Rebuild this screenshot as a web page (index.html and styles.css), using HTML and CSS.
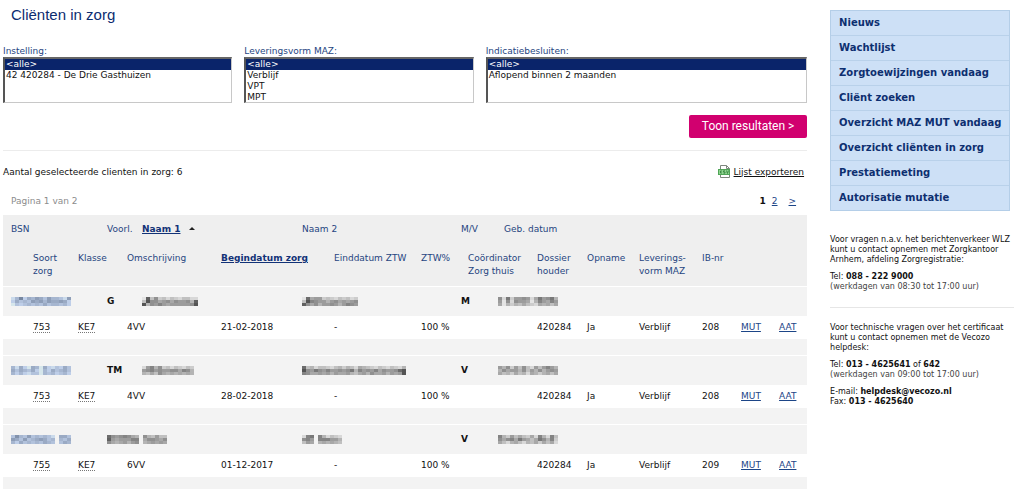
FILE: index.html
```html
<!DOCTYPE html>
<html lang="nl">
<head>
<meta charset="utf-8">
<title>Cliënten in zorg</title>
<link rel="stylesheet" href="styles.css">
</head>
<body>
<div class="page">
<main class="main">
  <h1 class="title">Cliënten in zorg</h1>
  <form class="filter" onsubmit="return false">
    <div class="fields">
      <div class="field">
        <label for="instelling">Instelling:</label>
        <select id="instelling" class="list" size="4">
          <option selected>&lt;alle&gt;</option>
          <option>42 420284 - De Drie Gasthuizen</option>
        </select>
      </div>
      <div class="field">
        <label for="leveringsvorm">Leveringsvorm MAZ:</label>
        <select id="leveringsvorm" class="list" size="4">
          <option selected>&lt;alle&gt;</option>
          <option>Verblijf</option>
          <option>VPT</option>
          <option>MPT</option>
        </select>
      </div>
      <div class="field">
        <label for="besluiten">Indicatiebesluiten:</label>
        <select id="besluiten" class="list" size="4">
          <option selected>&lt;alle&gt;</option>
          <option>Aflopend binnen 2 maanden</option>
        </select>
      </div>
    </div>
    <button class="submit" type="submit">Toon resultaten &gt;</button>
  </form>
  <div class="summary">
    <span>Aantal geselecteerde clienten in zorg: 6</span>
    <a class="export" href="#">
      <svg class="csv" viewBox="0 0 13 14" width="13" height="14" aria-hidden="true">
        <path d="M2.500 .5h6l3 3v9h-9z" fill="#fff" stroke="#7d867d"/>
        <path d="M8.500 .5v3h3" fill="none" stroke="#7d867d"/>
        <rect x=".5" y="4.500" width="11" height="5" fill="#8fd48f" stroke="#4fa556"/>
        <path d="M4 6H2.500v2H4M7 5.800H5.500v1.200H7v1.200H5.500M8.500 5.500l1 3 1-3" fill="none" stroke="#2f7d38" stroke-width=".8"/>
      </svg>
      <span class="export-text">Lijst exporteren</span>
    </a>
  </div>
  <div class="pager">
    <span class="pager-info">Pagina 1 van 2</span>
    <nav class="pager-nav" aria-label="Pagina's"><b>1</b><a href="#">2</a><a class="next" href="#">&gt;</a></nav>
  </div>
  <table class="clients">
    <colgroup>
      <col style="width:8px"><col style="width:22px"><col style="width:45px"><col style="width:29px"><col style="width:20px"><col style="width:15px"><col style="width:79px"><col style="width:81px"><col style="width:32px"><col style="width:87px"><col style="width:40px"><col style="width:7px"><col style="width:30px"><col style="width:6px"><col style="width:33px"><col style="width:50px"><col style="width:52px"><col style="width:63px"><col style="width:39px"><col style="width:38px"><col style="width:28px">
    </colgroup>
    <thead>
      <tr class="head-top">
        <td></td><th colspan="3">BSN</th><th colspan="2">Voorl.</th>
        <th colspan="2"><a class="sort" href="#">Naam 1</a><svg class="arrow" viewBox="0 0 6 3" width="6" height="3" aria-hidden="true"><path d="M0 3L3 0l3 3z" fill="#222"/></svg></th>
        <th colspan="3">Naam 2</th><th colspan="3">M/V</th><th colspan="7">Geb. datum</th>
      </tr>
      <tr class="head-sub">
        <td colspan="2"></td><th>Soort<br>zorg</th><th colspan="2">Klasse</th><th colspan="2">Omschrijving</th>
        <th colspan="2"><a class="sort" href="#">Begindatum zorg</a></th><th>Einddatum ZTW</th><th colspan="2">ZTW%</th>
        <th colspan="3">Coördinator<br>Zorg thuis</th><th>Dossier<br>houder</th><th>Opname</th><th>Leverings-<br>vorm MAZ</th><th>IB-nr</th><td colspan="2"></td>
      </tr>
    </thead>
    <tbody>
      <tr class="person">
        <td></td><td colspan="3"><svg class="mosaic blue" data-rows="c95b8978a799ac7/b8a9a787978878b/daba9a9a8a99a9b"></svg></td><td colspan="2">G</td>
        <td colspan="2"><svg class="mosaic" data-rows="e3b7cbdbcdbbdd/b27798797887a3/2a786898888872"></svg></td>
        <td colspan="3"><svg class="mosaic" data-rows="e4988cbcdbcbdc/b26788a8798987/3797a8878a8678"></svg></td>
        <td colspan="2">M</td><td colspan="8"><svg class="mosaic" data-rows="7d5c8878d95875a/8e7d7889ea68968/9eacab9bcd9a9b9"></svg></td>
      </tr>
      <tr class="care">
        <td colspan="2"></td><td><abbr>753</abbr></td><td colspan="2"><abbr>KE7</abbr></td><td colspan="2">4VV</td><td colspan="2">21-02-2018</td><td>-</td><td colspan="2">100 %</td><td colspan="3"></td><td>420284</td><td>Ja</td><td>Verblijf</td><td>208</td><td><a href="#">MUT</a></td><td><a href="#">AAT</a></td>
      </tr>
      <tr class="spacer"><td colspan="21"></td></tr>
      <tr class="person">
        <td></td><td colspan="3"><svg class="mosaic blue" data-rows="9c8bd89d8bcab8a/8a89a8bd9b8a98a/9b9bcaad9a9ba9b"></svg></td><td colspan="2">TM</td>
        <td colspan="2"><svg class="mosaic" data-rows="d86a7cbdbcdbc/876878877967a/ab9b79a9a9a9a"></svg></td>
        <td colspan="3"><svg class="mosaic" data-rows="4badbbcdbacabd9abcdbcdbcda/2785786887875a687869788742/6799898a8998ab98a7998a8982"></svg></td>
        <td colspan="2">V</td><td colspan="8"><svg class="mosaic" data-rows="8a7c8b7bd8b868a/a7988a7b8a7a878/9bac9bad9aca9b9"></svg></td>
      </tr>
      <tr class="care">
        <td colspan="2"></td><td><abbr>753</abbr></td><td colspan="2"><abbr>KE7</abbr></td><td colspan="2">4VV</td><td colspan="2">28-02-2018</td><td>-</td><td colspan="2">100 %</td><td colspan="3"></td><td>420284</td><td>Ja</td><td>Verblijf</td><td>208</td><td><a href="#">MUT</a></td><td><a href="#">AAT</a></td>
      </tr>
      <tr class="spacer"><td colspan="21"></td></tr>
      <tr class="person">
        <td></td><td colspan="3"><svg class="mosaic blue" data-rows="a69a7a9a9ac.88a/78a7a9878a9.9a8/9b8a9a9a89a.a89"></svg></td>
        <td colspan="4"><svg class="mosaic" data-rows="4787679a.7ab8bb/38988866.977897/79a98a87.a98989"></svg></td>
        <td colspan="3"><svg class="mosaic" data-rows="d65.6adbcd/768.66688a/b89.a9a9ab"></svg></td>
        <td colspan="2">V</td><td colspan="8"><svg class="mosaic" data-rows="6ac8b9bc9d6ad6b/79769589b957a6c/9bda9bdab9c9b9d"></svg></td>
      </tr>
      <tr class="care">
        <td colspan="2"></td><td><abbr>755</abbr></td><td colspan="2"><abbr>KE7</abbr></td><td colspan="2">6VV</td><td colspan="2">01-12-2017</td><td>-</td><td colspan="2">100 %</td><td colspan="3"></td><td>420284</td><td>Ja</td><td>Verblijf</td><td>209</td><td><a href="#">MUT</a></td><td><a href="#">AAT</a></td>
      </tr>
      <tr class="spacer"><td colspan="21"></td></tr>
    </tbody>
  </table>
</main>
<aside class="side">
  <nav class="menu" aria-label="Menu">
    <a href="#">Nieuws</a>
    <a href="#">Wachtlijst</a>
    <a href="#">Zorgtoewijzingen vandaag</a>
    <a href="#">Cliënt zoeken</a>
    <a href="#">Overzicht MAZ MUT vandaag</a>
    <a href="#">Overzicht cliënten in zorg</a>
    <a href="#">Prestatiemeting</a>
    <a href="#">Autorisatie mutatie</a>
  </nav>
  <section class="contact">
    <p>Voor vragen n.a.v. het berichtenverkeer WLZ<br>kunt u contact opnemen met Zorgkantoor<br>Arnhem, afdeling Zorgregistratie:</p>
    <p>Tel: <b>088 - 222 9000</b><br><span class="hours">(werkdagen van 08:30 tot 17:00 uur)</span></p>
  </section>
  <section class="contact">
    <p>Voor technische vragen over het certificaat<br>kunt u contact opnemen met de Vecozo<br>helpdesk:</p>
    <p>Tel: <b>013 - 4625641</b> of <b>642</b><br><span class="hours">(werkdagen van 09:00 tot 17:00 uur)</span></p>
    <p>E-mail: <b>helpdesk@vecozo.nl</b><br>Fax: <b>013 - 4625640</b></p>
  </section>
</aside>
</div>
<script src="mosaic.js"></script>
</body>
</html>
```

FILE: styles.css
```css
* { box-sizing: border-box; }
html { overflow: hidden; }
body {
  margin: 0;
  background: #fff;
  color: #111;
  font: 9px/13px Verdana, "DejaVu Sans", sans-serif;
}
a { color: #1c4587; }
.page {
  display: grid;
  grid-template-columns: 1fr 184px;
  gap: 23px;
  padding: 0 10px 0 3px;
}
.title {
  margin: 0;
  padding: 5px 8px 20px;
  color: #0c2c70;
  font: 15px/20px "Liberation Sans", Arial, sans-serif;
}
.filter {
  display: flex;
  flex-direction: column;
  padding-bottom: 12px;
  border-bottom: 1px solid #ececec;
}
.fields {
  display: grid;
  grid-template-columns: 229fr 229fr 321fr;
  gap: 12px;
}
.field { display: flex; flex-direction: column; }
.field label { line-height: 12px; color: #26457f; }
.list {
  width: 100%;
  height: 46px;
  padding: 0;
  border: 1px solid #c8c8c8;
  border-top: 2px solid #666;
  border-left: 2px solid #555;
  border-radius: 0;
  background: #fff;
  color: #111;
  font: inherit;
  overflow: hidden;
}
.list option {
  min-height: 0;
  height: 11px;
  padding: 0 1px;
  line-height: 11px;
}
.list option:checked {
  background: linear-gradient(#0a246a, #0a246a);
  color: #fff;
  -webkit-text-fill-color: #fff;
}
.submit {
  align-self: flex-end;
  width: 118px;
  height: 23px;
  margin-top: 12px;
  padding: 0;
  border: 0;
  border-radius: 2px;
  background: #d1006f;
  color: #fff;
  font: 12px/23px Roboto, sans-serif;
}
.summary {
  display: flex;
  justify-content: space-between;
  align-items: center;
  padding: 14px 3px 0 0;
}
.export {
  display: flex;
  align-items: center;
  gap: 3px;
  color: #111;
  text-decoration: none;
}
.export-text { text-decoration: underline; }
.pager {
  display: flex;
  justify-content: space-between;
  padding: 16px 11px 7px 8px;
}
.pager-info { color: #8c8c8c; }
.pager-nav { display: flex; gap: 6px; }
.next { margin-left: 5px; }
.clients {
  width: 100%;
  border-collapse: collapse;
  table-layout: fixed;
}
.clients td, .clients th {
  padding: 0;
  text-align: left;
  white-space: nowrap;
}
.clients th { color: #26457f; font-weight: normal; vertical-align: top; }
.clients thead { background: #efefef; }
.head-top { height: 37px; }
.clients .head-top th { padding-top: 8px; }
.head-sub { height: 34px; border-bottom: 1px solid #fff; }
.sort { color: #123277; font-weight: bold; }
.arrow { margin-left: 9px; vertical-align: 2px; }
.person { height: 30px; background: #f3f3f3; font-weight: bold; }
.care { height: 23px; }
.care abbr { border-bottom: 1px dotted #777; }
.spacer { height: 16px; background: #f3f3f3; border-bottom: 1px solid #fff; }
.mosaic { display: block; }
.menu {
  width: 180px;
  margin-top: 10px;
  border: 1px solid #b4cee8;
  background: #cde0f6;
}
.menu a {
  display: block;
  padding: 6px 8px;
  border-bottom: 1px solid #b9d1ea;
  color: #0d2f70;
  font-size: 10px;
  line-height: 12px;
  font-weight: bold;
  text-decoration: none;
  white-space: nowrap;
}
.menu a:last-child { border-bottom: 0; }
.contact {
  padding: 15px 0;
  font-size: 8px;
  line-height: 10px;
  white-space: nowrap;
}
.menu + .contact { padding-top: 24px; border-bottom: 1px solid #e6e6e6; }
.contact p { margin: 0 0 7px; }
.contact p:last-child { margin: 0; }
.hours { color: #444; }
```

FILE: mosaic.js
```js
// Draws masked personal data as blocks; each hex digit is a brightness, a dot is a gap.
const CELL = 4;
const ROW = 3;
document.querySelectorAll('.mosaic').forEach((svg) => {
  const rows = svg.dataset.rows.split('/');
  const blue = svg.classList.contains('blue');
  svg.setAttribute('width', rows[0].length * CELL);
  svg.setAttribute('height', rows.length * ROW);
  svg.setAttribute('aria-hidden', 'true');
  rows.forEach((row, y) => [...row].forEach((digit, x) => {
    if (digit === '.') return;
    const v = 60 + parseInt(digit, 16) * 12;
    const rect = document.createElementNS('http://www.w3.org/2000/svg', 'rect');
    rect.setAttribute('x', x * CELL);
    rect.setAttribute('y', y * ROW);
    rect.setAttribute('width', CELL);
    rect.setAttribute('height', ROW);
    rect.setAttribute('fill', blue ? `rgb(${v - 2},${v + 14},${Math.min(v + 40, 235)})` : `rgb(${v},${v},${v})`);
    svg.append(rect);
  }));
});
```
